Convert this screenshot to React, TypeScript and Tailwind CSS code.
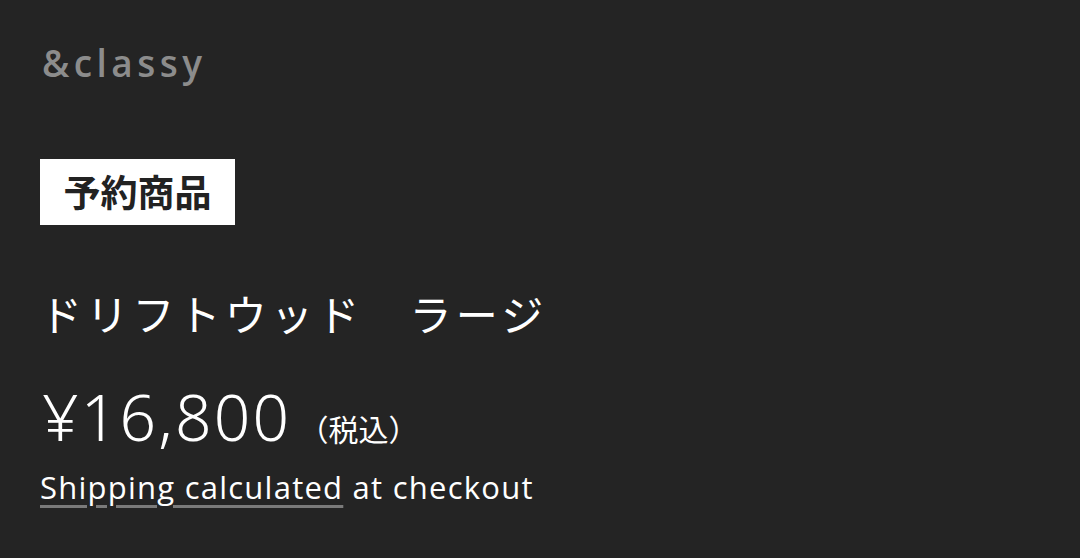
export default function App() {
	return (
		<div className="h-[558px] w-[1080px] overflow-hidden bg-[#242424] px-10 pt-[38px] font-['Noto_Sans','Noto_Sans_CJK_JP',sans-serif]">
			<div className="pl-[2px] font-['Open_Sans',sans-serif] text-[37px] font-semibold leading-[50px] tracking-[0.12em] text-[#8c8c8c]">
				&amp;classy
			</div>

			<div className="mt-[71px] inline-flex h-[66px] w-[195px] items-center justify-center bg-white font-['Noto_Sans_CJK_JP',sans-serif] text-[37px] font-bold text-[#222]">
				予約商品
			</div>

			<h1 className="mt-[58px] font-['Noto_Sans_CJK_JP',sans-serif] text-[42px] font-normal leading-[60px] tracking-[0.1em] text-white">
				ドリフトウッド　ラージ
			</h1>

			<div className="mt-[39px] flex h-[70px] items-baseline pl-[2px] text-white">
				<span className="font-['Noto_Sans',sans-serif] text-[64px] font-light leading-[70px] tracking-[0.035em]">
					¥16,800
				</span>
				<span className="ml-[7px] font-['Noto_Sans_CJK_JP',sans-serif] text-[30px] leading-[40px]">
					（税込）
				</span>
			</div>

			<p className="mt-[15px] font-['Open_Sans',sans-serif] text-[31px] leading-[40px] tracking-[0.04em] text-white">
				<span className="underline decoration-[#7a7a7a] decoration-[3px] underline-offset-[6px]">
					Shipping calculated
				</span>{" "}
				at checkout
			</p>
		</div>
	);
}
